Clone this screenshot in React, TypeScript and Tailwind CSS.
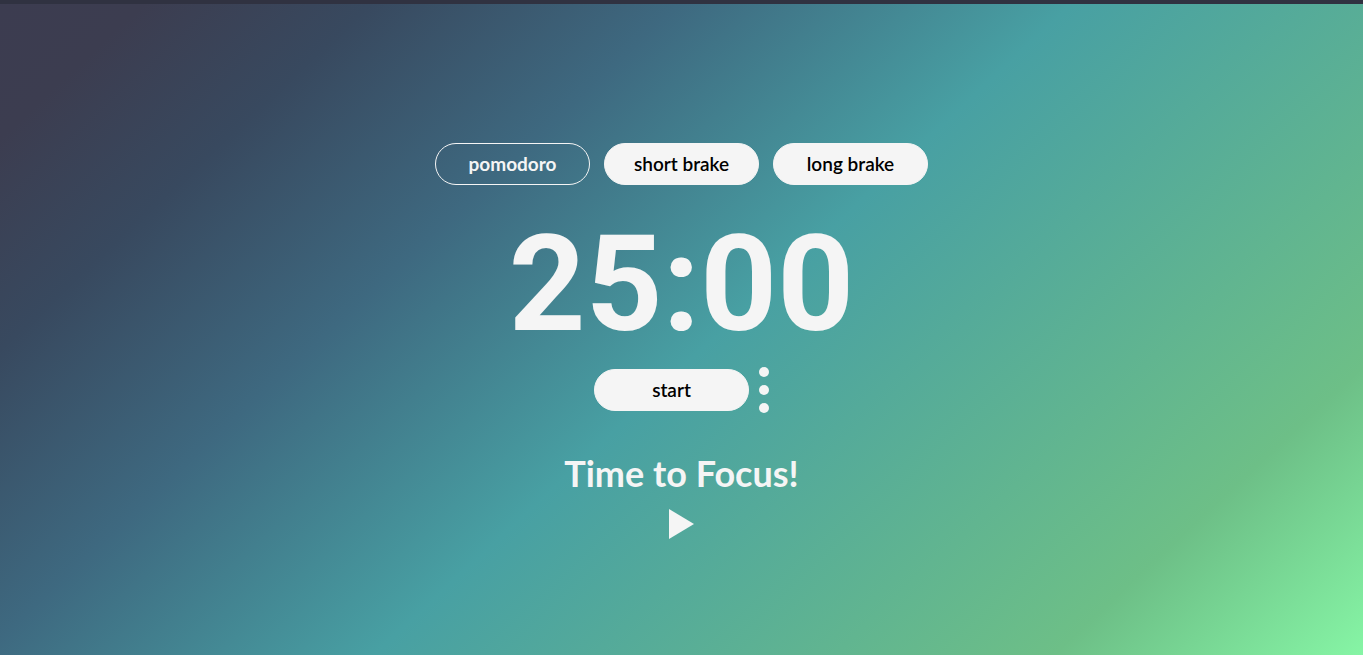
import { useState } from "react";

const modes = [
  { name: "pomodoro", time: "25:00", message: "Time to Focus!" },
  { name: "short brake", time: "05:00", message: "Time for a short brake!" },
  { name: "long brake", time: "15:00", message: "Time for a long brake!" },
];

const pill =
  "h-[42px] w-[155px] rounded-full border border-[#f5f5f5] text-center text-[19px] leading-[24px] cursor-pointer";

export default function App() {
  const [active, setActive] = useState(0);
  const mode = modes[active];

  return (
    <main className="flex min-h-screen flex-col items-center border-t-4 border-[#303241] bg-[linear-gradient(137deg,#3c3c50_0%,#3c3d50_7%,#38495f_18%,#3e6980_33%,#48a0a3_52%,#6dbf87_85%,#86f5a5_100%)] pt-[139px] pb-10 font-['Lato',sans-serif] text-[#f5f5f5]">
      <nav className="flex flex-wrap justify-center gap-[14px]" aria-label="Timer mode">
        {modes.map((m, i) => (
          <button
            key={m.name}
            type="button"
            onClick={() => setActive(i)}
            className={`${pill} ${
              i === active ? "bg-transparent font-bold text-[#f5f5f5]" : "bg-[#f5f5f5] font-semibold text-black"
            }`}
          >
            {m.name}
          </button>
        ))}
      </nav>

      <div className="mt-[32px] font-['Roboto',sans-serif] text-[134px] leading-[136px] font-bold">{mode.time}</div>

      <div className="mt-[14px] flex items-center gap-[10px]">
        <button type="button" className={`${pill} bg-[#f5f5f5] font-semibold text-black`}>
          start
        </button>
        <button type="button" aria-label="Options" className="flex cursor-pointer flex-col gap-[8px]">
          <span className="size-[10px] rounded-full bg-[#f5f5f5]" />
          <span className="size-[10px] rounded-full bg-[#f5f5f5]" />
          <span className="size-[10px] rounded-full bg-[#f5f5f5]" />
        </button>
      </div>

      <h1 className="mt-[36px] text-[36px] leading-[48px] font-bold">{mode.message}</h1>

      <button type="button" aria-label="Play" className="mt-[12px] cursor-pointer">
        <svg width="25" height="30" viewBox="0 0 25 30" fill="#f5f5f5" className="block">
          <path d="M0 0 25 15 0 30Z" />
        </svg>
      </button>
    </main>
  );
}
